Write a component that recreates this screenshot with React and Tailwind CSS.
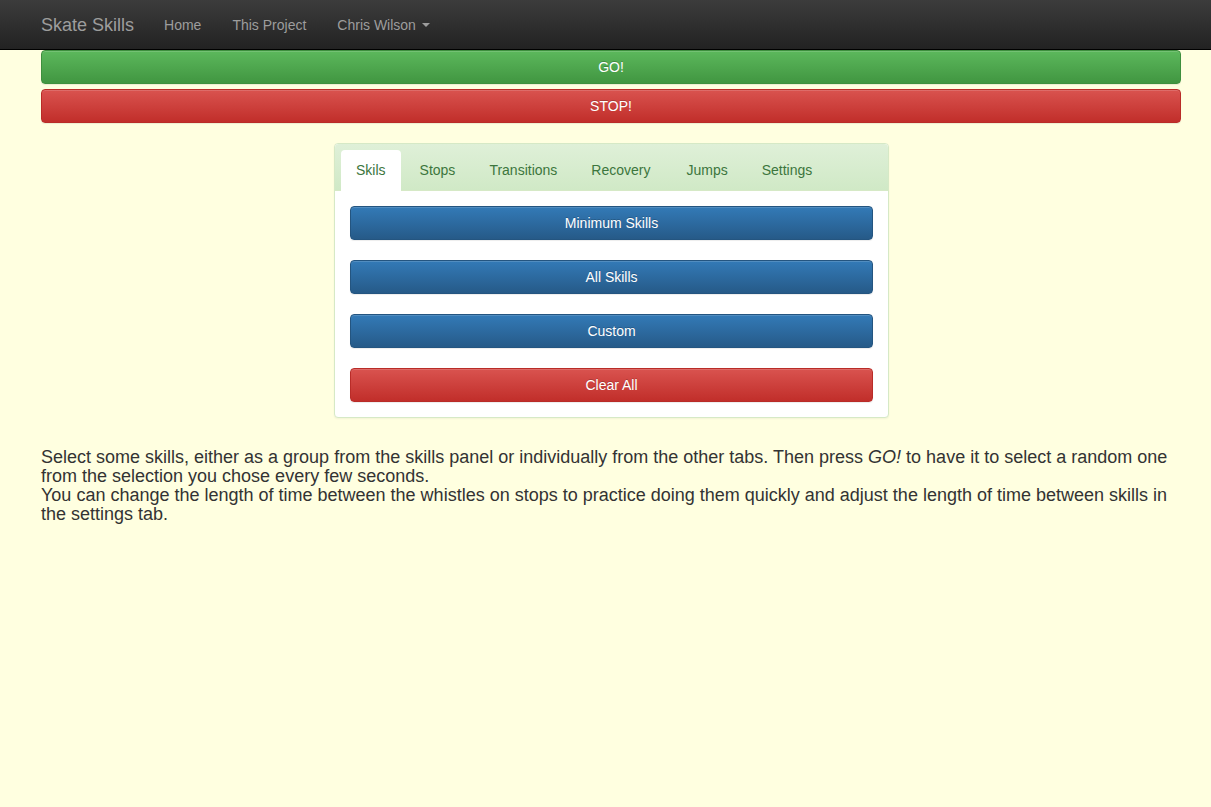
const TABS = ['Skils', 'Stops', 'Transitions', 'Recovery', 'Jumps', 'Settings'];

const BTN = {
  green: 'bg-[linear-gradient(to_bottom,#5cb85c_0%,#419641_100%)] border-[#3e8f3e]',
  red: 'bg-[linear-gradient(to_bottom,#d9534f_0%,#c12e2a_100%)] border-[#b92c28]',
  blue: 'bg-[linear-gradient(to_bottom,#337ab7_0%,#265a88_100%)] border-[#245580]',
};

function Button({ color, children }) {
  return (
    <button
      className={`block w-full h-[34px] rounded border text-[14px] text-white [text-shadow:0_-1px_0_rgba(0,0,0,0.2)] shadow-[inset_0_1px_0_rgba(255,255,255,0.15),0_1px_1px_rgba(0,0,0,0.075)] ${BTN[color]}`}
    >
      {children}
    </button>
  );
}

export default function App() {
  return (
    <div className="min-h-[807px] bg-[#ffffe0] text-[#333] font-['Liberation_Sans',Arial,sans-serif]">
      {/* Navbar */}
      <nav className="h-[50px] border-b border-black bg-[linear-gradient(to_bottom,#3c3c3c_0%,#222_100%)]">
        <div className="flex items-center h-[50px] px-[41px]">
          <span className="text-[18px] text-[#9d9d9d] mr-[30px]">Skate Skills</span>
          <div className="flex items-center text-[14px] text-[#9d9d9d]">
            <span className="mr-[31px]">Home</span>
            <span className="mr-[31px]">This Project</span>
            <span className="flex items-center">
              Chris Wilson
              <span className="ml-[6px] w-0 h-0 border-x-[4px] border-x-transparent border-t-[4px] border-t-[#9d9d9d]" />
            </span>
          </div>
        </div>
      </nav>

      <div className="px-[41px] pr-[30px]">
        <div className="flex flex-col gap-[5px] w-[1140px]">
          <Button color="green">GO!</Button>
          <Button color="red">STOP!</Button>
        </div>

        {/* Panel */}
        <div className="w-[555px] ml-[293px] mt-[20px] bg-white border border-[#d6e9c6] rounded shadow-[0_1px_2px_rgba(0,0,0,0.05)]">
          <div className="flex pt-[6px] px-[6px] rounded-t bg-[linear-gradient(to_bottom,#dff0d8_0%,#d0e9c6_100%)] border-b border-[#d6e9c6]">
            {TABS.map((t, i) => (
              <div
                key={t}
                className={`h-[40px] px-[15px] mr-[4px] flex items-center text-[14px] text-[#3c763d] rounded-t ${i === 0 ? 'bg-white mb-[-1px] h-[41px] mr-[3px]' : ''} ${i === 3 ? 'mr-[6px]' : ''}`}
              >
                {t}
              </div>
            ))}
          </div>
          <div className="flex flex-col gap-[20px] px-[15px] pt-[15px] pb-[15px]">
            <Button color="blue">Minimum Skills</Button>
            <Button color="blue">All Skills</Button>
            <Button color="blue">Custom</Button>
            <Button color="red">Clear All</Button>
          </div>
        </div>

        <div className="w-[1140px] mt-[30px] text-[18px] leading-[19px]">
          <p>
            Select some skills, either as a group from the skills panel or individually from the other tabs. Then press{' '}
            <em>GO!</em> to have it to select a random one from the selection you chose every few seconds.
          </p>
          <p>
            You can change the length of time between the whistles on stops to practice doing them quickly and adjust
            the length of time between skills in the settings tab.
          </p>
        </div>
      </div>
    </div>
  );
}
